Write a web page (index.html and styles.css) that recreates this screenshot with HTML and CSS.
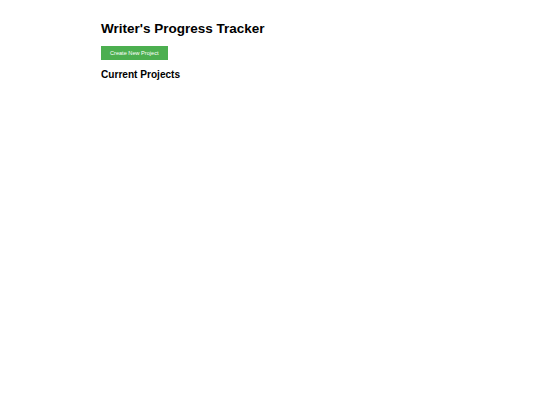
FILE: index.html
```html
<!DOCTYPE html>
<html>
<head>
<meta charset="utf-8">
<title>Writer's Progress Tracker</title>
<link rel="stylesheet" href="styles.css">
</head>
<body>
<div class="container">
  <h1 class="title">Writer's Progress Tracker</h1>
  <div class="actions">
    <button class="btn-create" type="button">Create New Project</button>
  </div>
  <h2 class="section-title">Current Projects</h2>
  <div class="projects"></div>
</div>
</body>
</html>
```
FILE: styles.css
```css
html, body {
  margin: 0;
  padding: 0;
  background: #ffffff;
}
body {
  font-family: "Liberation Sans", Arial, sans-serif;
  color: #000000;
}
.container {
  width: 338px;
  margin: 0 auto;
  padding-top: 21px;
}
.title {
  margin: 0;
  font-size: 13.5px;
  line-height: 16px;
  font-weight: bold;
}
.actions {
  margin-top: 9px;
  display: flex;
}
.btn-create {
  font-family: "Liberation Sans", Arial, sans-serif;
  font-size: 5.6px;
  line-height: 6px;
  padding: 4px 9px;
  background: #4caf50;
  color: #ffffff;
  border: none;
  border-radius: 0;
  margin: 0;
}
.section-title {
  margin: 9px 0 0 0;
  font-size: 10.1px;
  line-height: 12px;
  font-weight: bold;
}
```
